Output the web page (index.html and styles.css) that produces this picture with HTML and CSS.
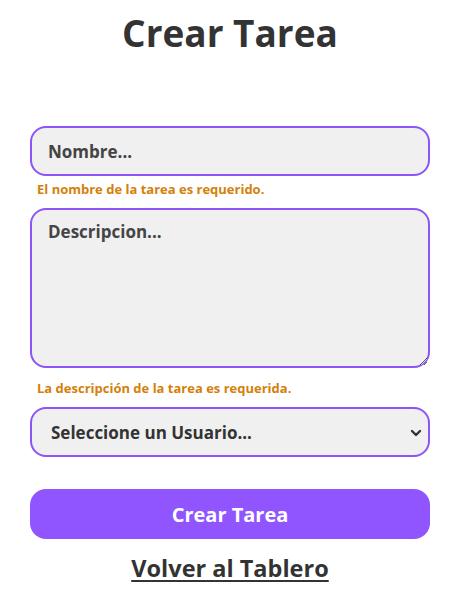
FILE: index.html
```html
<!DOCTYPE html>
<html lang="es">
<head>
<meta charset="utf-8">
<title>Crear Tarea</title>
<link rel="stylesheet" href="styles.css">
</head>
<body>
<main class="page">
  <h1 class="title">Crear Tarea</h1>
  <form class="form">
    <input class="field" type="text" placeholder="Nombre...">
    <p class="error">El nombre de la tarea es requerido.</p>
    <textarea class="field area" placeholder="Descripcion..."></textarea>
    <p class="error">La descripción de la tarea es requerida.</p>
    <div class="select-wrap">
      <select class="field select">
        <option>Seleccione un Usuario...</option>
      </select>
      <svg class="chev" width="12" height="8" viewBox="0 0 12 8"><path d="M2 2l4 4 4-4" fill="none" stroke="#333" stroke-width="2.4" stroke-linecap="round" stroke-linejoin="round"/></svg>
    </div>
    <button class="btn" type="button">Crear Tarea</button>
    <a class="back" href="#">Volver al Tablero</a>
  </form>
</main>
</body>
</html>
```
FILE: styles.css
```css
* { box-sizing: border-box; }
body {
  margin: 0;
  background: #fff;
  font-family: "Open Sans", "Noto Sans", sans-serif;
  color: #333;
}
.page {
  padding: 8px 30px 0;
  display: flex;
  flex-direction: column;
  align-items: center;
}
.title {
  margin: 0;
  font-size: 37px;
  font-weight: 700;
  line-height: 50px;
  color: #333;
}
.form {
  width: 400px;
  margin-top: 68px;
  display: flex;
  flex-direction: column;
}
.field {
  width: 100%;
  height: 50px;
  border: 2px solid #8b55f7;
  border-radius: 16px;
  background: #f0f0f0;
  font-family: inherit;
  font-size: 17px;
  font-weight: 700;
  color: #333;
  padding: 0 16px;
  outline: none;
}
.field::placeholder { color: #444; opacity: 1; }
.area {
  height: 160px;
  padding: 10px 16px;
  resize: vertical;
  display: block;
}
.error {
  margin: 0;
  padding: 5px 0 0 7px;
  height: 32px;
  font-size: 13px;
  font-weight: 700;
  color: #d5800a;
  line-height: 16px;
}
.area + .error { height: 39px; padding-top: 12px; }
.select-wrap { position: relative; }
.select {
  appearance: none;
  -webkit-appearance: none;
  padding-left: 19px;
  color: #333;
}
.chev { position: absolute; right: 8px; top: 22px; pointer-events: none; }
.btn {
  margin-top: 32px;
  height: 50px;
  border: none;
  border-radius: 16px;
  background: #9155ff;
  color: #fff;
  font-family: inherit;
  font-size: 20px;
  font-weight: 700;
}
.back {
  align-self: center;
  margin-top: 13px;
  font-size: 23.5px;
  font-weight: 700;
  color: #333;
  text-decoration: underline;
  text-underline-offset: 3px;
  text-decoration-thickness: 2px;
}
```
